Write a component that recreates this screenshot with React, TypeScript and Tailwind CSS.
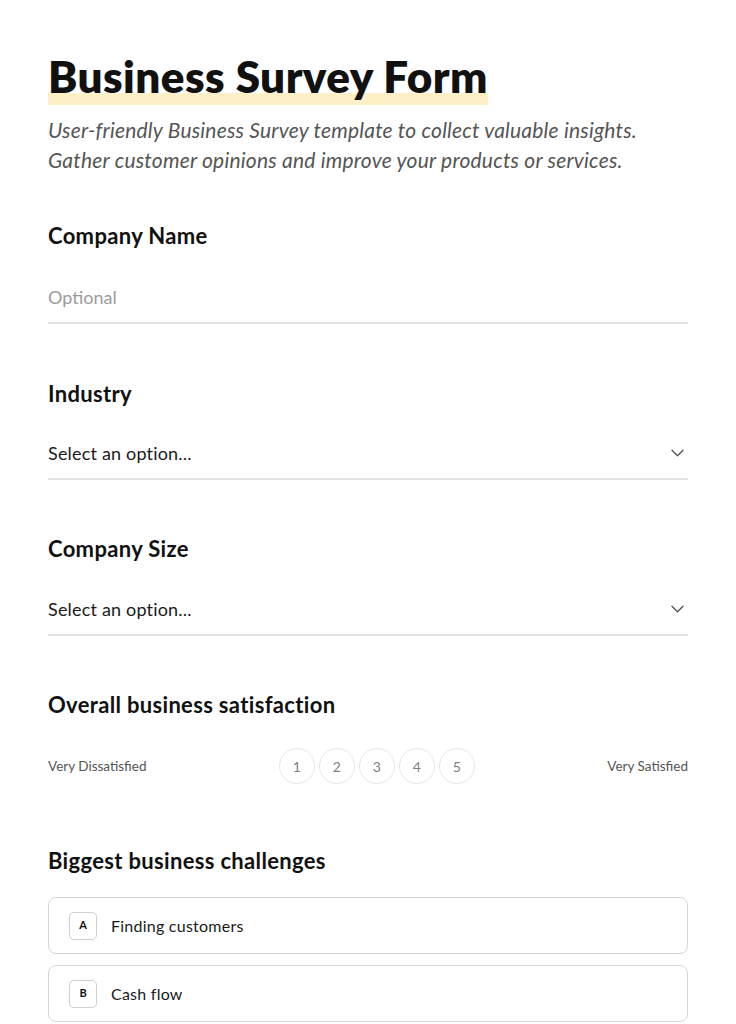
import { useState } from "react";

const FONT = "font-['Lato','Liberation_Sans',sans-serif]";

function Chevron() {
  return (
    <svg width="13" height="8" viewBox="0 0 13 8" fill="none" className="shrink-0 mr-[4px]">
      <path d="M1 1.2l5.5 5.5L12 1.2" stroke="#555" strokeWidth="1.4" strokeLinecap="round" strokeLinejoin="round" />
    </svg>
  );
}

function Label({ children, className = "" }: { children: React.ReactNode; className?: string }) {
  return (
    <h2 className={`text-[22px] leading-[28px] font-bold tracking-[0.015em] text-[#111] ${className}`}>{children}</h2>
  );
}

function SelectField() {
  return (
    <div className="flex items-center justify-between pb-[13px] border-b-2 border-[#e3e3e3] cursor-pointer">
      <span className="text-[18px] leading-6 tracking-[0.01em] text-[#1a1a1a]">Select an option...</span>
      <Chevron />
    </div>
  );
}

const OPTIONS = [
  { key: "A", label: "Finding customers" },
  { key: "B", label: "Cash flow" },
];

export default function App() {
  const [rating, setRating] = useState<number | null>(null);

  return (
    <div className={`min-h-screen bg-white ${FONT}`}>
      <div className="px-12 pt-[51px] pb-12">
        <h1 className="inline-block text-[44px] leading-[50px] pb-[4px] font-extrabold tracking-[0.01em] text-[#111] bg-[linear-gradient(to_bottom,transparent_42px,#fdf0c6_42px)]">
          Business Survey Form
        </h1>
        <p className="mt-[10px] text-[21px] leading-[30px] italic tracking-[0.01em] text-[#555]">
          User-friendly Business Survey template to collect valuable insights.
          <br />
          Gather customer opinions and improve your products or services.
        </p>

        <Label className="mt-[47px]">Company Name</Label>
        <input
          placeholder="Optional"
          className="mt-[35px] block w-full text-[18px] leading-6 pb-[13px] border-b-2 border-[#e3e3e3] outline-none placeholder:text-[#9b9b9b] text-[#1a1a1a]"
        />

        <Label className="mt-[56px]">Industry</Label>
        <div className="mt-[33px]">
          <SelectField />
        </div>

        <Label className="mt-[55px]">Company Size</Label>
        <div className="mt-[34px]">
          <SelectField />
        </div>

        <Label className="mt-[55px]">Overall business satisfaction</Label>
        <div className="mt-[29px] flex items-center justify-between">
          <span className="text-[13.5px] text-[#555]">Very Dissatisfied</span>
          <div className="flex gap-1">
            {[1, 2, 3, 4, 5].map((n) => (
              <button
                key={n}
                onClick={() => setRating(n)}
                className={`w-9 h-9 rounded-full border flex items-center justify-center text-[14px] ${
                  rating === n ? "border-[#111] text-[#111]" : "border-[#e6e6e6] text-[#808080]"
                }`}
              >
                {n}
              </button>
            ))}
          </div>
          <span className="text-[13.5px] text-[#555]">Very Satisfied</span>
        </div>

        <Label className="mt-[63px]">Biggest business challenges</Label>
        <div className="mt-[22px] flex flex-col gap-[11px]">
          {OPTIONS.map((o) => (
            <div key={o.key} className="h-[57px] flex items-center gap-3.5 pl-5 border border-[#d6d6d6] rounded-lg">
              <span className="w-7 h-7 flex items-center justify-center rounded-[5px] border border-[#cfcfcf] text-[11px] font-bold text-[#111]">
                {o.key}
              </span>
              <span className="text-[16px] tracking-[0.015em] text-[#1a1a1a]">{o.label}</span>
            </div>
          ))}
        </div>
      </div>
    </div>
  );
}
